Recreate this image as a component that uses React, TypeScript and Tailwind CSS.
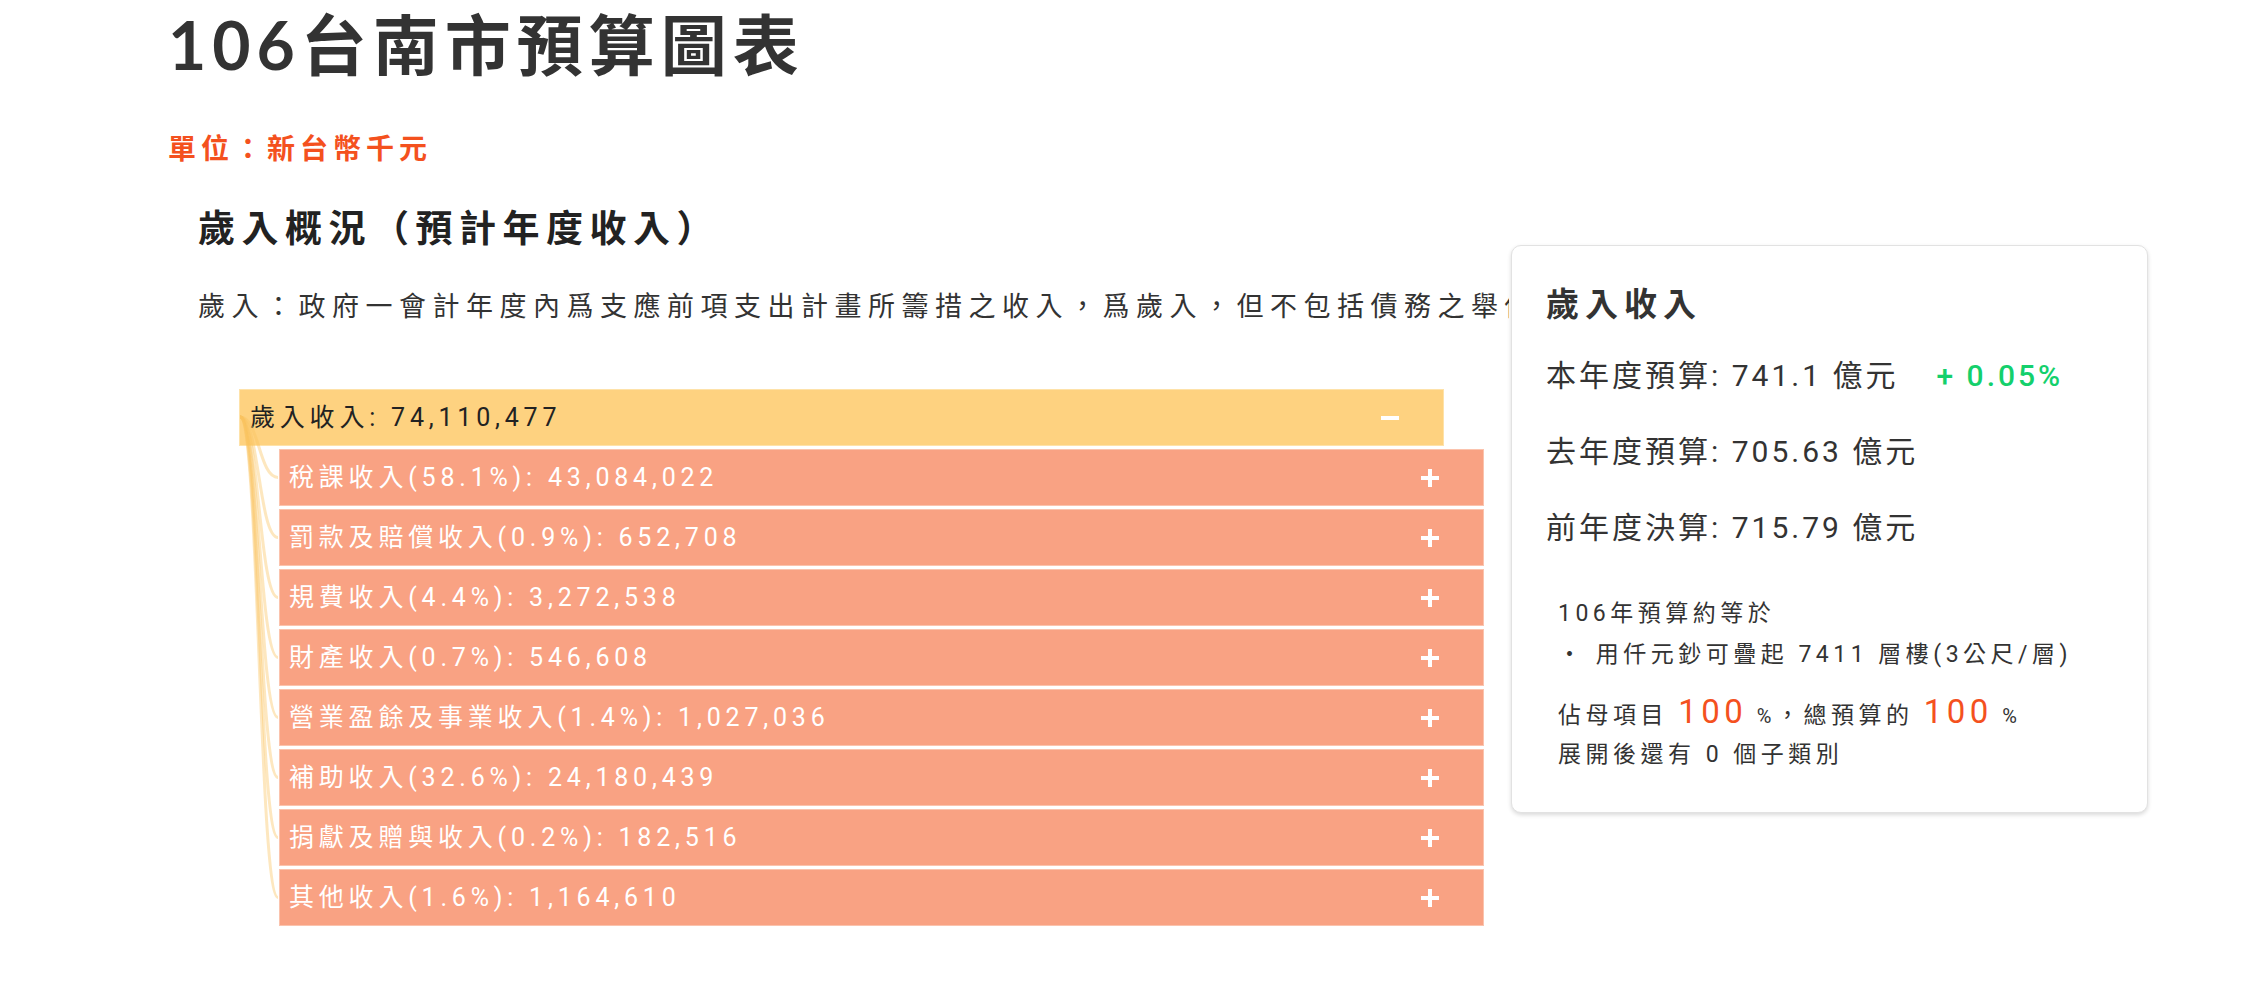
import React from "react";

const children = [
  "稅課收入(58.1%): 43,084,022",
  "罰款及賠償收入(0.9%): 652,708",
  "規費收入(4.4%): 3,272,538",
  "財產收入(0.7%): 546,608",
  "營業盈餘及事業收入(1.4%): 1,027,036",
  "補助收入(32.6%): 24,180,439",
  "捐獻及贈與收入(0.2%): 182,516",
  "其他收入(1.6%): 1,164,610",
];

function Plus() {
  return (
    <svg width="18" height="18" viewBox="0 0 18 18" className="absolute right-[44px] top-1/2 -translate-y-1/2">
      <rect x="0" y="7" width="18" height="4" fill="#fff" />
      <rect x="7" y="0" width="4" height="18" fill="#fff" />
    </svg>
  );
}

function Minus() {
  return (
    <svg width="18" height="18" viewBox="0 0 18 18" className="absolute right-[44px] top-1/2 -translate-y-1/2">
      <rect x="0" y="7" width="18" height="4" fill="#fff" />
    </svg>
  );
}

export default function App() {
  const rowTop = (i: number) => 60 + 60 * i + 28.5;
  return (
    <div className="relative w-[2256px] h-[992px] overflow-hidden bg-white text-[#333] font-['Roboto','Noto_Sans_CJK_TC',sans-serif]">
      <div className="pl-[168px] pt-[5px]">
        <h1 className="text-[66px] leading-[80px] font-bold tracking-[6px] text-[#333] font-['Lato','Noto_Sans_CJK_TC',sans-serif]">
          106台南市預算圖表
        </h1>
        <div className="mt-[42px] text-[28px] leading-[40px] font-bold tracking-[5px] text-[#f4511e] font-['Noto_Sans_CJK_TC',sans-serif]">
          單位：新台幣千元
        </div>
        <div className="pl-[30px]">
          <h2 className="mt-[34px] text-[37px] leading-[50px] font-bold tracking-[6.5px] text-[#222] font-['Noto_Sans_CJK_TC',sans-serif]">
            歲入概況（預計年度收入）
          </h2>
          <div className="mt-[34px] w-[1311px] overflow-hidden">
            <p className="text-[27px] leading-[40px] tracking-[6.5px] whitespace-nowrap text-[#333] font-['Noto_Sans_CJK_TC',sans-serif]">
              歲入：政府一會計年度內爲支應前項支出計畫所籌措之收入，爲歲入，但不包括債務之舉借及以前年度歲計賸餘之移用。
            </p>
          </div>
          <div className="relative mt-[64px] ml-[41px]">
            <div className="relative flex items-center h-[57px] w-[1205px] bg-[#fed280] border border-[#fee2a9] pl-[10px] text-[25px] tracking-[4.8px] text-[#222]">
              歲入收入: 74,110,477
              <Minus />
            </div>
            <div className="ml-[40px] mt-[3px] flex flex-col gap-[3px]">
              {children.map((c) => (
                <div
                  key={c}
                  className="relative flex items-center h-[57px] w-[1205px] bg-[#f9a283] border border-[#fbc3ad] pl-[9px] text-[25px] tracking-[4.8px] text-white"
                >
                  {c}
                  <Plus />
                </div>
              ))}
            </div>
            <svg
              className="absolute left-0 top-0 pointer-events-none"
              width="60"
              height="560"
              viewBox="0 0 60 560"
            >
              {children.map((c, i) => {
                const y1 = rowTop(i);
                return (
                  <path
                    key={c}
                    d={`M 1 28 C 20 28, 20 ${y1}, 39 ${y1}`}
                    fill="none"
                    stroke="#f9c25e"
                    strokeOpacity="0.4"
                    strokeWidth="3"
                  />
                );
              })}
            </svg>
          </div>
        </div>
      </div>

      <div className="absolute left-[1511px] top-[245px] w-[637px] h-[568px] bg-white rounded-[10px] border border-[#e2e2e2] shadow-[0_2px_4px_rgba(0,0,0,0.15)] text-[#333]">
        <div className="pl-[34px] pt-[36px]">
          <div className="text-[33px] leading-[40px] font-bold tracking-[6px] font-['Noto_Sans_CJK_TC',sans-serif]">
            歲入收入
          </div>
          <div className="mt-[34px] text-[30px] leading-[40px] tracking-[3px] whitespace-nowrap">
            本年度預算: 741.1 億元
            <span className="ml-[38px] font-medium text-[#14d06c]">+ 0.05%</span>
          </div>
          <div className="mt-[36px] text-[30px] leading-[40px] tracking-[3px] whitespace-nowrap">
            去年度預算: 705.63 億元
          </div>
          <div className="mt-[36px] text-[30px] leading-[40px] tracking-[3px] whitespace-nowrap">
            前年度決算: 715.79 億元
          </div>
        </div>
        <div className="pl-[46px]">
          <div className="mt-[51px] text-[23px] leading-[30px] tracking-[4.5px]">106年預算約等於</div>
          <div className="mt-[11px] text-[23px] leading-[30px] tracking-[4.5px] whitespace-nowrap">
            ・ 用仟元鈔可疊起 7411 層樓(3公尺/層)
          </div>
          <div className="mt-[22px] text-[23px] leading-[40px] tracking-[4.5px] whitespace-nowrap">
            佔母項目 <span className="text-[33px] text-[#f4511e]">100</span>
            <span className="text-[20px]"> %</span>，總預算的{" "}
            <span className="text-[33px] text-[#f4511e]">100</span>
            <span className="text-[20px]"> %</span>
          </div>
          <div className="mt-[4px] text-[23px] leading-[30px] tracking-[4.5px] whitespace-nowrap">
            展開後還有 0 個子類別
          </div>
        </div>
      </div>
    </div>
  );
}
